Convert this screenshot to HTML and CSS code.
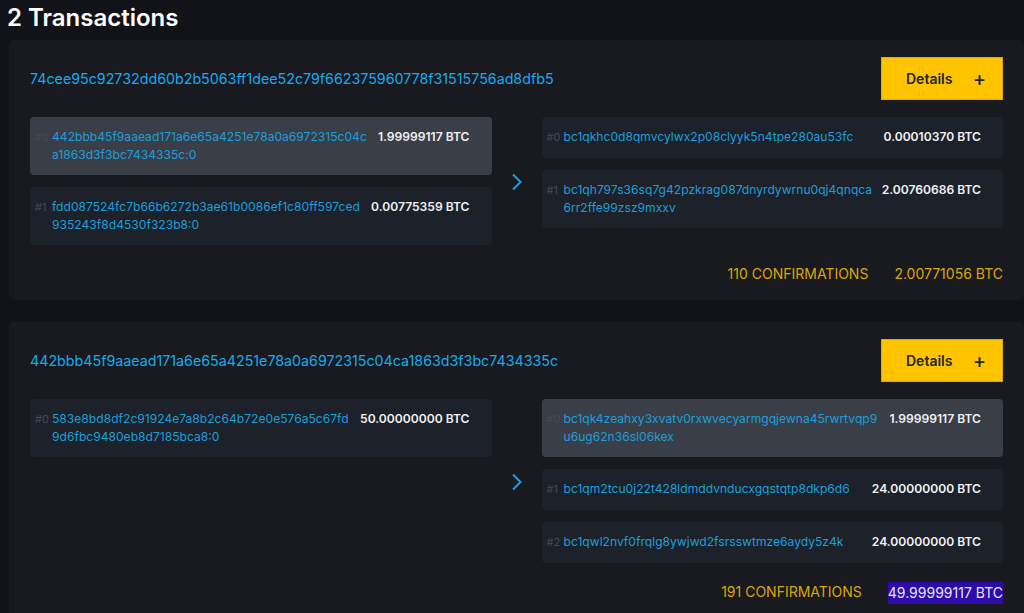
FILE: index.html
```html
<!DOCTYPE html>
<html lang="en">
<head>
  <meta charset="UTF-8">
  <meta name="viewport" content="width=device-width, initial-scale=1.0">
  <title>Transactions</title>
  <link rel="stylesheet" href="styles.css">
</head>
<body>
<div class="page">
  <h2 class="page-title">2 Transactions</h2>

  <!-- Transaction 1 -->
  <div class="tx-card">
    <div class="tx-header">
      <a class="tx-id" href="#">74cee95c92732dd60b2b5063ff1dee52c79f662375960778f31515756ad8dfb5</a>
      <button class="details-btn"><span>Details</span><span class="plus">+</span></button>
    </div>
    <div class="tx-body">
      <div class="tx-column">
        <div class="io-row active">
          <span class="io-index">#0</span>
          <a class="io-address" href="#">442bbb45f9aaead171a6e65a4251e78a0a6972315c04ca1863d3f3bc7434335c:0</a>
          <span class="io-amount">1.99999117 BTC</span>
        </div>
        <div class="io-row">
          <span class="io-index">#1</span>
          <a class="io-address" href="#">fdd087524fc7b66b6272b3ae61b0086ef1c80ff597ced935243f8d4530f323b8:0</a>
          <span class="io-amount">0.00775359 BTC</span>
        </div>
      </div>
      <div class="tx-arrow">
        <svg width="12" height="18" viewBox="0 0 12 18"><path d="M2 1.5 L9.5 9 L2 16.5" fill="none" stroke="#1a9fe0" stroke-width="2"/></svg>
      </div>
      <div class="tx-column">
        <div class="io-row">
          <span class="io-index">#0</span>
          <a class="io-address" href="#">bc1qkhc0d8qmvcylwx2p08clyyk5n4tpe280au53fc</a>
          <span class="io-amount">0.00010370 BTC</span>
        </div>
        <div class="io-row">
          <span class="io-index">#1</span>
          <a class="io-address" href="#">bc1qh797s36sq7g42pzkrag087dnyrdywrnu0qj4qnqca6rr2ffe99zsz9mxxv</a>
          <span class="io-amount">2.00760686 BTC</span>
        </div>
      </div>
    </div>
    <div class="tx-footer">
      <span>110 CONFIRMATIONS</span>
      <span>2.00771056 BTC</span>
    </div>
  </div>

  <!-- Transaction 2 -->
  <div class="tx-card">
    <div class="tx-header">
      <a class="tx-id" href="#">442bbb45f9aaead171a6e65a4251e78a0a6972315c04ca1863d3f3bc7434335c</a>
      <button class="details-btn"><span>Details</span><span class="plus">+</span></button>
    </div>
    <div class="tx-body">
      <div class="tx-column">
        <div class="io-row">
          <span class="io-index">#0</span>
          <a class="io-address" href="#">583e8bd8df2c91924e7a8b2c64b72e0e576a5c67fd9d6fbc9480eb8d7185bca8:0</a>
          <span class="io-amount">50.00000000 BTC</span>
        </div>
      </div>
      <div class="tx-arrow">
        <svg width="12" height="18" viewBox="0 0 12 18"><path d="M2 1.5 L9.5 9 L2 16.5" fill="none" stroke="#1a9fe0" stroke-width="2"/></svg>
      </div>
      <div class="tx-column">
        <div class="io-row active">
          <span class="io-index">#0</span>
          <a class="io-address" href="#">bc1qk4zeahxy3xvatv0rxwvecyarmgqjewna45rwrtvqp9u6ug62n36sl06kex</a>
          <span class="io-amount">1.99999117 BTC</span>
        </div>
        <div class="io-row">
          <span class="io-index">#1</span>
          <a class="io-address" href="#">bc1qm2tcu0j22t428ldmddvnducxgqstqtp8dkp6d6</a>
          <span class="io-amount">24.00000000 BTC</span>
        </div>
        <div class="io-row">
          <span class="io-index">#2</span>
          <a class="io-address" href="#">bc1qwl2nvf0frqlg8ywjwd2fsrsswtmze6aydy5z4k</a>
          <span class="io-amount">24.00000000 BTC</span>
        </div>
      </div>
    </div>
    <div class="tx-footer">
      <span>191 CONFIRMATIONS</span>
      <span class="selected">49.99999117 BTC</span>
    </div>
  </div>
</div>
</body>
</html>
```
FILE: styles.css
```css
* {
  margin: 0;
  padding: 0;
  box-sizing: border-box;
}

body {
  font-family: 'Inter', 'Roboto', sans-serif;
  background-color: #111318;
  color: #fff;
  overflow: hidden;
}

a {
  text-decoration: none;
}

.page {
  padding-left: 9px;
}

.page-title {
  font-size: 24px;
  font-weight: 600;
  line-height: 36px;
  height: 40px;
  margin-left: -2px;
}

/* Card */
.tx-card {
  width: 1015px;
  background-color: #181a20;
  border-radius: 5px;
  padding: 17px 21px 16px 21px;
  margin-bottom: 22px;
}

.tx-header {
  display: flex;
  justify-content: space-between;
  align-items: center;
  height: 43px;
  margin-bottom: 17px;
}

.tx-id {
  color: #18aaed;
  font-size: 14.25px;
}

.details-btn {
  width: 122px;
  height: 43px;
  background-color: #ffc400;
  border: 1px solid #e0a800;
  color: #212529;
  font-family: inherit;
  font-size: 14px;
  font-weight: 600;
  display: flex;
  align-items: center;
  justify-content: space-between;
  padding: 0 16px 0 24px;
  cursor: pointer;
}

.details-btn .plus {
  font-size: 20px;
  font-weight: 500;
  line-height: 1;
}

/* Inputs / outputs */
.tx-body {
  display: grid;
  grid-template-columns: 1fr 50px 1fr;
  align-items: start;
}

.tx-column {
  display: flex;
  flex-direction: column;
  gap: 12px;
}

.tx-arrow {
  align-self: center;
  display: flex;
  justify-content: center;
  padding-top: 2px;
}

.io-row {
  display: flex;
  align-items: flex-start;
  background-color: #1d2129;
  border-radius: 4px;
  padding: 11px 22px 11px 5px;
  font-size: 12.1px;
  line-height: 18px;
  min-height: 41px;
}

.io-row.active {
  background-color: #3a3e46;
}

.io-index {
  color: #454a53;
  font-size: 11px;
  width: 17px;
  flex-shrink: 0;
}

.io-address {
  color: #1b9fdc;
  flex: 1;
  word-break: break-all;
}

.io-amount {
  white-space: nowrap;
  font-weight: 600;
  margin-left: 6px;
  color: #f1f1f3;
}

/* Footer */
.tx-footer {
  display: flex;
  justify-content: flex-end;
  gap: 26px;
  margin-top: 19px;
  font-size: 14px;
  line-height: 20px;
  color: #dca60a;
}

.selected {
  background-color: #2c0ba8;
  color: #e4e4ff;
  padding: 1px 0;
}
```
